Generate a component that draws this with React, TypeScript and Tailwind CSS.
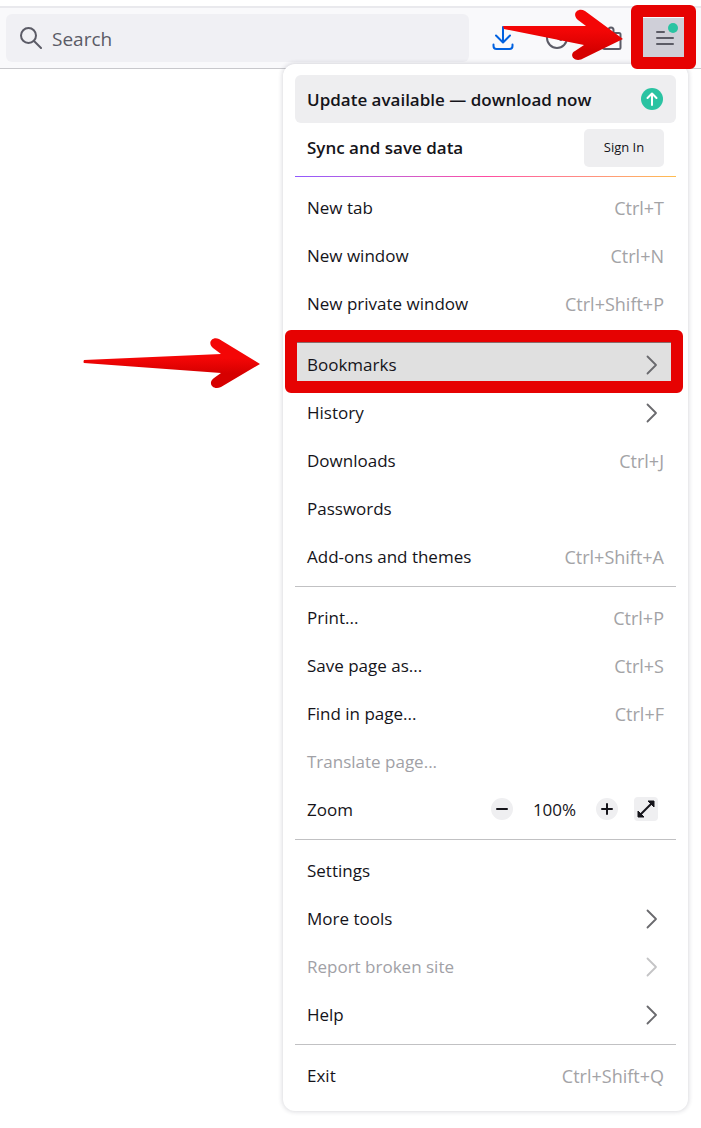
import { ReactNode } from 'react';
import clsx from 'clsx';

interface MenuItemProps {
  label: string;
  shortcut?: string;
  submenu?: boolean;
  disabled?: boolean;
  active?: boolean;
  children?: ReactNode;
}

function ChevronIcon() {
  return (
    <svg width="12" height="20" viewBox="0 0 12 20" fill="none" stroke="currentColor" strokeWidth="1.8" strokeLinecap="round" strokeLinejoin="round" className="mr-1.5">
      <path d="M1.500 1.500 10 10l-8.500 8.500" />
    </svg>
  );
}

function MenuItem({ label, shortcut, submenu, disabled, active, children }: MenuItemProps) {
  return (
    <li className="relative">
      <button
        type="button"
        disabled={disabled}
        className={clsx(
          'flex h-12 w-full items-center justify-between px-3 pt-0.5 text-left',
          disabled ? 'text-[#a1a1a6]' : 'text-[#15141a]',
          active && 'bg-[#e0e0e0]'
        )}
      >
        <span>{label}</span>
        {shortcut && <span className="text-lg text-[#a3a3a6]">{shortcut}</span>}
        {submenu && (
          <span className={disabled ? 'text-[#c4c4c6]' : 'text-[#6a6a6e]'}>
            <ChevronIcon />
          </span>
        )}
      </button>
      {children}
    </li>
  );
}

function Separator() {
  return <li role="separator" className="my-1.5 h-px bg-[#c1c1c3]" />;
}

function ToolbarButton({ label, children }: { label: string; children: ReactNode }) {
  return (
    <button type="button" aria-label={label} className="relative flex h-12 w-[54px] items-center justify-center text-[#5b5b66]">
      {children}
    </button>
  );
}

function Toolbar() {
  return (
    <header className="flex h-[63px] items-center gap-[7px] border-t-2 border-b border-t-[#e9e9ed] border-b-[#c8c8cc] bg-[#f9f9fb] pr-[9px] pl-1.5">
      <label className="flex h-12 min-w-0 flex-1 items-center gap-2.5 rounded-md bg-[#f0f0f4] pl-3.5 text-[#5b5b66]">
        <svg width="22" height="22" viewBox="0 0 22 22" fill="none" stroke="currentColor" strokeWidth="2" strokeLinecap="round">
          <circle cx="8.500" cy="8.500" r="7.500" />
          <path d="m14 14 7 7" />
        </svg>
        <input
          type="text"
          aria-label="Search"
          placeholder="Search"
          className="min-w-0 flex-1 bg-transparent pt-0.5 text-[19px] outline-none placeholder:text-[#5b5b66]"
        />
      </label>
      <div className="flex">
        <ToolbarButton label="Downloads">
          <svg width="22" height="24" viewBox="0 0 22 24" fill="none" stroke="#0061e0" strokeWidth="2" strokeLinecap="round" strokeLinejoin="round">
            <path d="M11 1v15M4 9.500l7 7 7-7M1.500 18.500v1.500a3 3 0 0 0 3 3h13a3 3 0 0 0 3-3v-1.500" />
          </svg>
          <svg width="122" height="52" viewBox="0 0 122 52" className="absolute top-0 left-[27px] z-20 -mt-1 max-w-none overflow-visible">
            <defs>
              <linearGradient id="toolbarArrow" x1="0" y1="0" x2="0" y2="1">
                <stop offset="0.4" stopColor="#f40606" />
                <stop offset="0.8" stopColor="#d60000" />
              </linearGradient>
            </defs>
            <path d="M0 16h83l-8-6C68 4 75-3 82 1l38 28-42 20.500C70 52 66 44 72 41l9-6L1 19z" fill="url(#toolbarArrow)" />
          </svg>
        </ToolbarButton>
        <ToolbarButton label="History">
          <svg width="24" height="24" viewBox="0 0 24 24" fill="none" stroke="currentColor" strokeWidth="2" strokeLinecap="round">
            <circle cx="12" cy="12" r="10" />
            <path d="M12 6v6l4 2" />
          </svg>
        </ToolbarButton>
        <ToolbarButton label="Extensions">
          <svg width="22" height="26" viewBox="0 0 22 26" fill="none" stroke="currentColor" strokeWidth="2" strokeLinejoin="round">
            <path d="M8.500 8V5a2.500 2.500 0 0 1 5 0v3H19a1.500 1.500 0 0 1 1.500 1.500v13A1.500 1.500 0 0 1 19 24H4.500A1.500 1.500 0 0 1 3 22.500V17h2.500a2.500 2.500 0 0 0 0-5H3V9.500A1.500 1.500 0 0 1 4.500 8z" />
          </svg>
        </ToolbarButton>
        <ToolbarButton label="Open application menu">
          <span className="absolute inset-x-1 top-1 bottom-1 bg-[#cfcfd8]" />
          <svg width="20" height="16" viewBox="0 0 20 16" fill="none" stroke="currentColor" strokeWidth="2" strokeLinecap="round" className="relative">
            <path d="M2 2h7M2 8h16M2 14h16" />
          </svg>
          <span className="absolute top-[9px] left-[30px] size-2.5 rounded-full bg-[#2ac3a2]" />
          <span className="absolute -top-[9px] -right-1 -bottom-[7px] -left-[7px] z-20 rounded-md border-12 border-[#e60202]" />
        </ToolbarButton>
      </div>
    </header>
  );
}

function ZoomRow() {
  return (
    <li className="flex h-12 items-center pr-[18px] pl-3 text-[#15141a]">
      <span className="flex-1 pt-0.5">Zoom</span>
      <button type="button" aria-label="Zoom out" className="flex size-[22px] items-center justify-center rounded-full bg-[#efeff1]">
        <svg width="14" height="14" viewBox="0 0 14 14" stroke="currentColor" strokeWidth="2" strokeLinecap="round">
          <path d="M2 7h10" />
        </svg>
      </button>
      <span className="w-[83px] pt-0.5 text-center">100%</span>
      <button type="button" aria-label="Zoom in" className="flex size-[22px] items-center justify-center rounded-full bg-[#efeff1]">
        <svg width="14" height="14" viewBox="0 0 14 14" stroke="currentColor" strokeWidth="2" strokeLinecap="round">
          <path d="M2 7h10M7 2v10" />
        </svg>
      </button>
      <button type="button" aria-label="Full screen" className="ml-4 flex size-6 items-center justify-center rounded-sm bg-[#efeff1]">
        <svg width="18" height="18" viewBox="0 0 18 18" stroke="currentColor" strokeWidth="2" strokeLinejoin="round">
          <path d="M4 14 14 4" />
          <path d="M11 1h6v6zM1 11v6h6z" fill="currentColor" strokeWidth="1" />
        </svg>
      </button>
    </li>
  );
}

function BookmarksHighlight() {
  return (
    <>
      <span className="pointer-events-none absolute -top-2.5 -right-[7px] -bottom-[5px] -left-2.5 rounded-md border-12 border-[#e60202] shadow-[inset_0_1px_0_#8a6a6a]" />
      <svg width="176" height="52" viewBox="0 0 176 52" className="pointer-events-none absolute -top-0.5 right-full mr-[35px] max-w-none overflow-visible">
        <defs>
          <linearGradient id="menuArrow" x1="0" y1="0" x2="0" y2="1">
            <stop offset="0.4" stopColor="#f40606" />
            <stop offset="0.7" stopColor="#d60000" />
          </linearGradient>
        </defs>
        <path d="M0 22q-1 2 0 3l137 10-7 5c-7 5-1 13 7 9l39-23-41-25c-7-3-12 4-6 9l8 6z" fill="url(#menuArrow)" />
      </svg>
    </>
  );
}

function AppMenu() {
  return (
    <nav aria-label="Application menu" className="relative z-10 -mt-[5px] mr-[13px] ml-auto w-[405px] rounded-xl bg-white px-3 pt-[11px] pb-3 text-[17px] shadow-[0_0_4px_1px_rgba(40,40,60,0.16)]">
      <button type="button" className="flex h-12 w-full items-center justify-between rounded-md bg-[#eeeef0] px-3 pt-0.5 font-semibold text-[#15141a]">
        <span>Update available — download now</span>
        <svg width="24" height="24" viewBox="0 0 24 24" fill="none">
          <circle cx="12" cy="11" r="11" fill="#2ac3a2" />
          <path d="M12 17V6M7.500 10 12 5.500l4.500 4.500" stroke="#fff" strokeWidth="2" strokeLinecap="round" strokeLinejoin="round" />
        </svg>
      </button>
      <div className="flex h-[53px] items-center justify-between px-3 pb-[3px] font-semibold text-[#15141a]">
        <span>Sync and save data</span>
        <button type="button" className="h-[38px] w-20 rounded-[5px] bg-[#eeeef0] text-[13px] font-medium">
          Sign In
        </button>
      </div>
      <div className="mb-1.5 h-px bg-linear-to-r from-[#9059ff] via-[#ff4aa2] to-[#ffbd4f]" />
      <ul>
        <MenuItem label="New tab" shortcut="Ctrl+T" />
        <MenuItem label="New window" shortcut="Ctrl+N" />
        <MenuItem label="New private window" shortcut="Ctrl+Shift+P" />
        <Separator />
        <MenuItem label="Bookmarks" submenu active>
          <BookmarksHighlight />
        </MenuItem>
        <MenuItem label="History" submenu />
        <MenuItem label="Downloads" shortcut="Ctrl+J" />
        <MenuItem label="Passwords" />
        <MenuItem label="Add-ons and themes" shortcut="Ctrl+Shift+A" />
        <Separator />
        <MenuItem label="Print..." shortcut="Ctrl+P" />
        <MenuItem label="Save page as..." shortcut="Ctrl+S" />
        <MenuItem label="Find in page..." shortcut="Ctrl+F" />
        <MenuItem label="Translate page..." disabled />
        <ZoomRow />
        <Separator />
        <MenuItem label="Settings" />
        <MenuItem label="More tools" submenu />
        <MenuItem label="Report broken site" submenu disabled />
        <MenuItem label="Help" submenu />
        <Separator />
        <MenuItem label="Exit" shortcut="Ctrl+Shift+Q" />
      </ul>
    </nav>
  );
}

export default function App() {
  return (
    <div className="min-h-screen overflow-x-hidden bg-white pt-1.5 pb-4 font-['Open_Sans','Noto_Sans',sans-serif]">
      <Toolbar />
      <AppMenu />
    </div>
  );
}
